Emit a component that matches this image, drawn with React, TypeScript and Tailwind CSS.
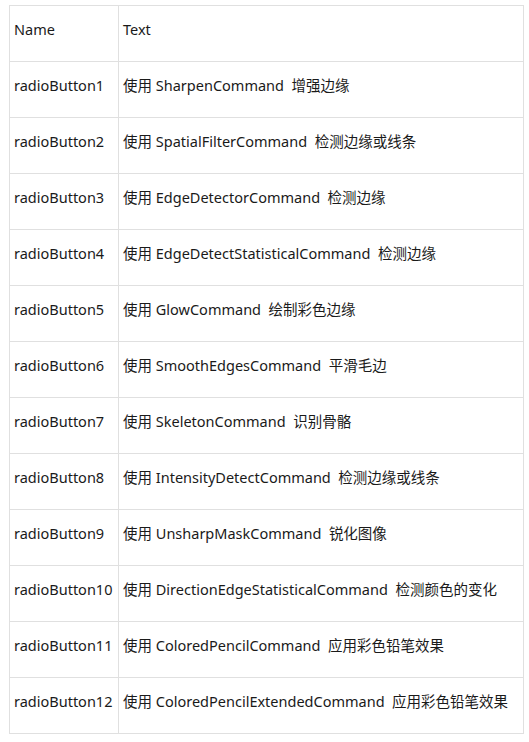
import React from "react";

const rows: [string, string, string][] = [
  ["radioButton1", "SharpenCommand", "增强边缘"],
  ["radioButton2", "SpatialFilterCommand", "检测边缘或线条"],
  ["radioButton3", "EdgeDetectorCommand", "检测边缘"],
  ["radioButton4", "EdgeDetectStatisticalCommand", "检测边缘"],
  ["radioButton5", "GlowCommand", "绘制彩色边缘"],
  ["radioButton6", "SmoothEdgesCommand", "平滑毛边"],
  ["radioButton7", "SkeletonCommand", "识别骨骼"],
  ["radioButton8", "IntensityDetectCommand", "检测边缘或线条"],
  ["radioButton9", "UnsharpMaskCommand", "锐化图像"],
  ["radioButton10", "DirectionEdgeStatisticalCommand", "检测颜色的变化"],
  ["radioButton11", "ColoredPencilCommand", "应用彩色铅笔效果"],
  ["radioButton12", "ColoredPencilExtendedCommand", "应用彩色铅笔效果"],
];

export default function App() {
  return (
    <div
      className="w-[529px] h-[742px] bg-white pt-[5px] pl-[9px] overflow-hidden text-[14.5px] text-[#1a1a1a]"
      style={{ fontFamily: '"Noto Sans", "Noto Sans CJK SC", sans-serif' }}
    >
      <table className="border-collapse w-[515px] table-fixed">
        <colgroup>
          <col className="w-[109px]" />
          <col />
        </colgroup>
        <tbody>
          <tr className="h-[56px]">
            <td className="border border-[#e0e0e0] pl-[4px] pb-[8px] whitespace-nowrap align-middle">Name</td>
            <td className="border border-[#e0e0e0] pl-[4px] pb-[8px] whitespace-nowrap align-middle">Text</td>
          </tr>
          {rows.map(([n, c, d]) => (
            <tr key={n} className="h-[56px]">
              <td className="border border-[#e0e0e0] pl-[4px] pb-[8px] whitespace-nowrap align-middle">{n}</td>
              <td className="border border-[#e0e0e0] pl-[4px] pb-[8px] whitespace-nowrap align-middle overflow-hidden">
                使用 {c}&nbsp;&nbsp;{d}
              </td>
            </tr>
          ))}
        </tbody>
      </table>
    </div>
  );
}
